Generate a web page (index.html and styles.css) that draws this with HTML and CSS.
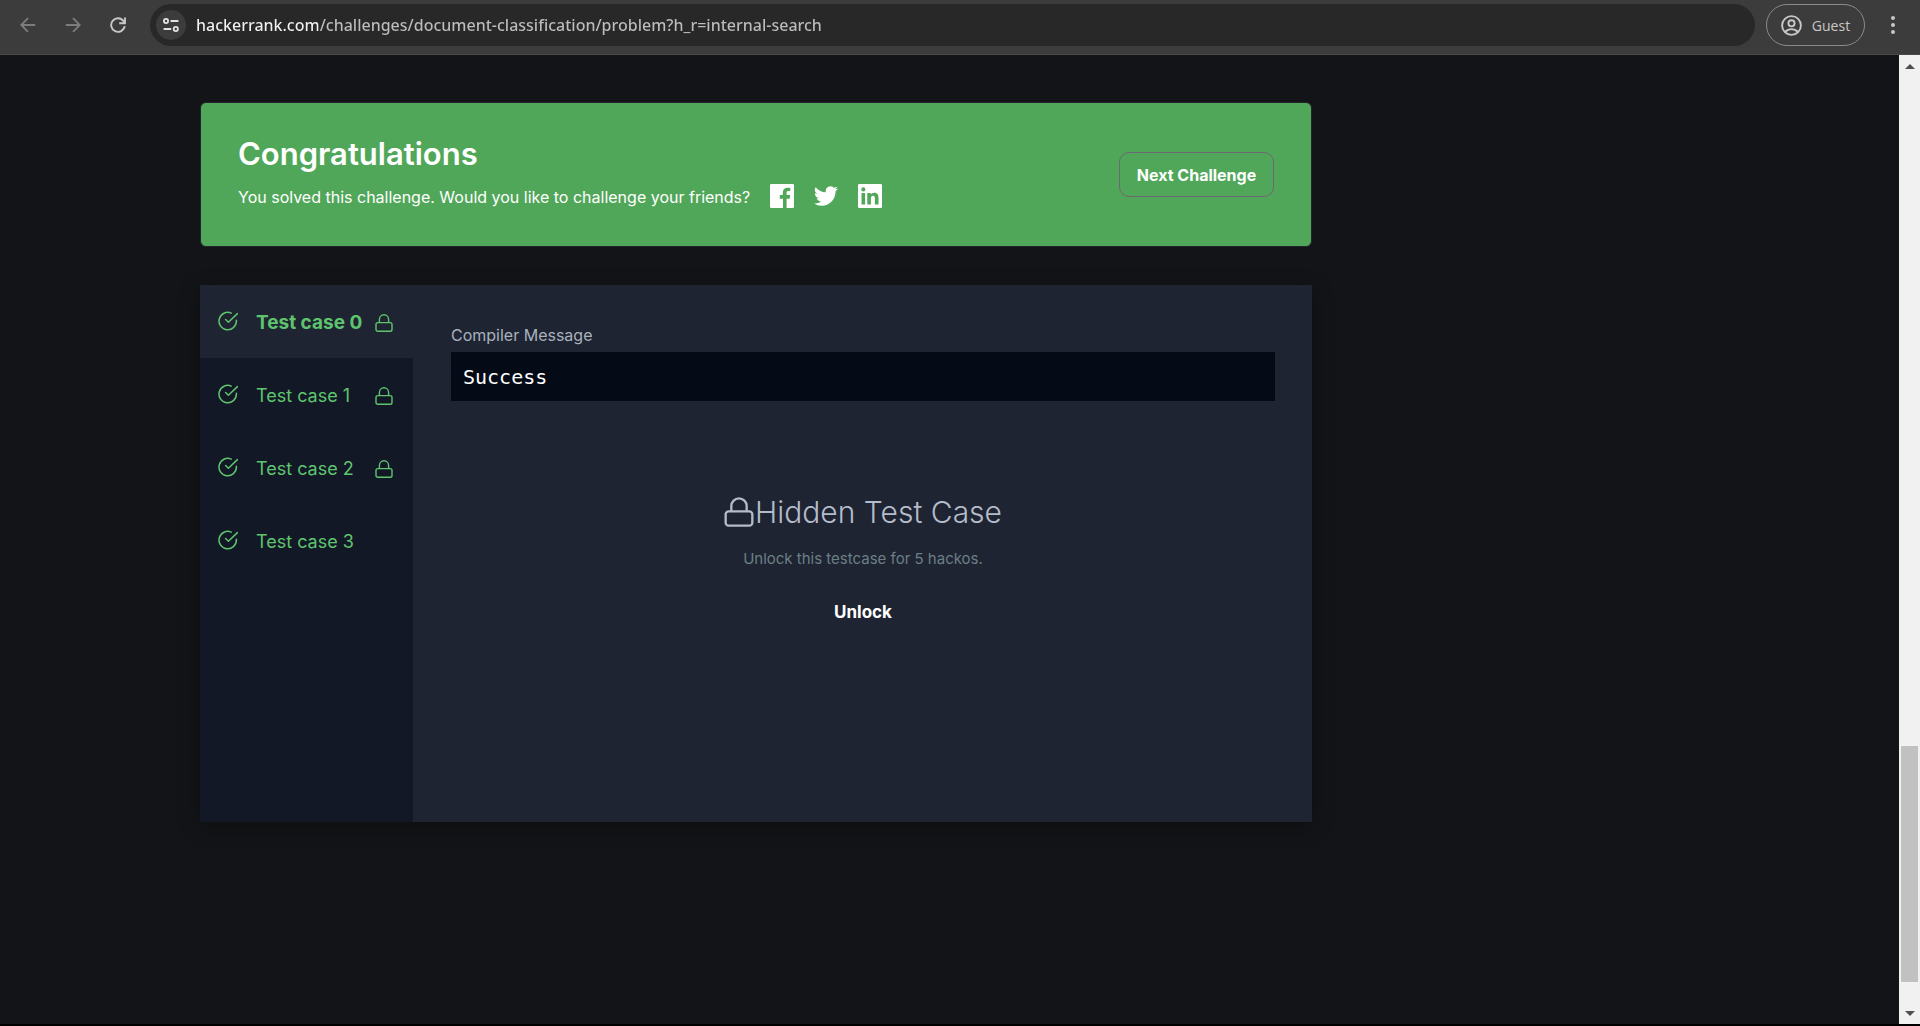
FILE: index.html
```html
<!DOCTYPE html>
<html lang="en">
<head>
<meta charset="utf-8">
<title>Document Classification | HackerRank</title>
<link rel="stylesheet" href="styles.css">
</head>
<body>
<svg class="sprite" aria-hidden="true">
  <symbol id="check" viewBox="0 0 20 20"><path d="M18.4 9.2v.8a8.7 8.7 0 1 1-5.2-7.9M19.4 2.6l-9 8.6-2.8-2.7" fill="none" stroke="currentColor" stroke-width="1.5" stroke-linecap="round" stroke-linejoin="round"/></symbol>
  <symbol id="lock" viewBox="0 0 18 18"><rect x="1" y="8.6" width="16" height="8.6" rx="1.8" fill="none" stroke="currentColor" stroke-width="1.4"/><path d="M4.4 8.6V5.4a4.6 4.6 0 0 1 9.2 0v3.2" fill="none" stroke="currentColor" stroke-width="1.4"/></symbol>
</svg>

<header class="toolbar">
  <nav class="nav">
    <button class="nav-btn nav-btn-off" type="button" aria-label="Back"><svg width="16" height="16" viewBox="0 0 16 16"><path d="M15.2 8H1.4M8 1.2L1.2 8 8 14.8" fill="none" stroke="currentColor" stroke-width="1.8"/></svg></button>
    <button class="nav-btn nav-btn-off" type="button" aria-label="Forward"><svg width="16" height="16" viewBox="0 0 16 16"><path d="M.8 8h13.8M8 1.2L14.8 8 8 14.8" fill="none" stroke="currentColor" stroke-width="1.8"/></svg></button>
    <button class="nav-btn" type="button" aria-label="Reload"><svg width="16" height="16" viewBox="0 0 16 16"><path d="M14.7 9.2A6.8 6.8 0 1 1 13.6 4.2L14.6 5.6M15 .4v5.8H9.2" fill="none" stroke="currentColor" stroke-width="1.9"/></svg></button>
  </nav>
  <div class="omnibox">
    <button class="site-info" type="button" aria-label="View site information"><svg width="16" height="14" viewBox="0 0 16 14"><g fill="none" stroke="currentColor" stroke-width="1.8"><circle cx="3" cy="3" r="2.1"/><path d="M7.6 3H15.4M.6 11H8.2"/><circle cx="12.8" cy="11" r="2.1"/></g></svg></button>
    <input class="address" type="text" aria-label="Address" value="hackerrank.com/challenges/document-classification/problem?h_r=internal-search">
  </div>
  <button class="guest" type="button">
    <svg width="21" height="21" viewBox="0 0 21 21"><g fill="none" stroke="currentColor" stroke-width="1.9"><circle cx="10.500" cy="10.500" r="9.400"/><circle cx="10.500" cy="8.300" r="3.100"/><path d="M4 17c1.800-2 4-2.900 6.500-2.900s4.700.9 6.500 2.900"/></g></svg>
    <span>Guest</span>
  </button>
  <button class="more" type="button" aria-label="More"><svg width="4" height="18" viewBox="0 0 4 18" fill="currentColor"><circle cx="2" cy="2" r="2"/><circle cx="2" cy="9" r="2"/><circle cx="2" cy="16" r="2"/></svg></button>
</header>

<div class="viewport">
  <main class="content">
    <section class="banner">
      <div class="banner-text">
        <h1 class="banner-title">Congratulations</h1>
        <div class="share">
          <p class="share-label">You solved this challenge. Would you like to challenge your friends?</p>
          <a class="share-link" href="#" aria-label="Facebook"><svg width="24" height="24" viewBox="0 0 24 24"><path fill="#fff" d="M1.300 0h21.400A1.300 1.300 0 0 1 24 1.300v21.400a1.300 1.300 0 0 1-1.300 1.300h-6.100v-9.300h3.100l.5-3.600h-3.600V8.800c0-1 .3-1.800 1.800-1.800h1.900V3.800c-.3 0-1.500-.1-2.800-.1-2.800 0-4.700 1.700-4.700 4.800v2.600H9.800v3.600h3.200V24H1.300A1.300 1.300 0 0 1 0 22.700V1.300A1.300 1.300 0 0 1 1.300 0z"/></svg></a>
          <a class="share-link" href="#" aria-label="Twitter"><svg width="24" height="24" viewBox="0 0 24 24"><path fill="#fff" d="M23.950 4.570a10 10 0 0 1-2.820.77 4.960 4.960 0 0 0 2.160-2.720c-.95.550-2 .95-3.130 1.180a4.920 4.920 0 0 0-8.380 4.480C7.690 8.090 4.070 6.130 1.640 3.160a4.920 4.920 0 0 0 1.520 6.570 4.900 4.900 0 0 1-2.230-.61v.06a4.920 4.920 0 0 0 3.950 4.830 5 5 0 0 1-2.210.08 4.940 4.940 0 0 0 4.600 3.420A9.870 9.870 0 0 1 0 19.540a13.990 13.990 0 0 0 7.550 2.210c9.050 0 14-7.500 14-13.980 0-.21 0-.42-.02-.63a9.940 9.940 0 0 0 2.460-2.550z"/></svg></a>
          <a class="share-link" href="#" aria-label="LinkedIn"><svg width="24" height="24" viewBox="0 0 24 24"><path fill="#fff" fill-rule="evenodd" d="M1.300 0h21.400A1.300 1.300 0 0 1 24 1.300v21.400a1.300 1.300 0 0 1-1.300 1.300H1.300A1.300 1.300 0 0 1 0 22.700V1.300A1.300 1.300 0 0 1 1.300 0zM3.500 9v11.400h3.600V9zM5.300 3.300a2.100 2.100 0 1 0 0 4.200 2.100 2.100 0 0 0 0-4.200zM9.300 9v11.400h3.600v-5.700c0-1.500.3-2.900 2.100-2.900s1.900 1.700 1.900 3v5.600h3.600v-6.200c0-3.100-.7-5.500-4.300-5.500-1.700 0-2.900.9-3.400 1.800V9z"/></svg></a>
        </div>
      </div>
      <button class="next" type="button">Next Challenge</button>
    </section>

    <section class="results">
      <div class="tabs" role="tablist">
        <button class="tab tab-active" type="button" role="tab" aria-selected="true"><svg class="tab-check"><use href="#check"/></svg><span class="tab-name">Test case 0</span><svg class="tab-lock"><use href="#lock"/></svg></button>
        <button class="tab" type="button" role="tab"><svg class="tab-check"><use href="#check"/></svg><span class="tab-name">Test case 1</span><svg class="tab-lock"><use href="#lock"/></svg></button>
        <button class="tab" type="button" role="tab"><svg class="tab-check"><use href="#check"/></svg><span class="tab-name">Test case 2</span><svg class="tab-lock"><use href="#lock"/></svg></button>
        <button class="tab" type="button" role="tab"><svg class="tab-check"><use href="#check"/></svg><span class="tab-name">Test case 3</span></button>
      </div>
      <div class="detail" role="tabpanel">
        <h2 class="detail-label">Compiler Message</h2>
        <pre class="output">Success</pre>
        <div class="hidden-case">
          <h3 class="hidden-title"><svg class="hidden-lock"><use href="#lock"/></svg>Hidden Test Case</h3>
          <p class="hidden-hint">Unlock this testcase for 5 hackos.</p>
          <button class="unlock" type="button">Unlock</button>
        </div>
      </div>
    </section>
  </main>
  <div class="scrollbar" aria-hidden="true">
    <span class="arrow arrow-up"></span>
    <span class="thumb"></span>
    <span class="arrow arrow-down"></span>
  </div>
</div>
</body>
</html>
```
FILE: styles.css
```css
* { box-sizing: border-box; }

body {
  margin: 0;
  min-height: 100vh;
  display: flex;
  flex-direction: column;
  background: #131417;
  border-bottom: 2px solid #000;
  color: #fff;
  font-family: Inter, "Liberation Sans", sans-serif;
  font-size: 16px;
}

button {
  padding: 0;
  border: 0;
  background: none;
  color: inherit;
  font: inherit;
}

h1, h2, h3, p, pre { margin: 0; }

svg { display: block; flex: none; }

.sprite { position: absolute; width: 0; height: 0; }

/* Browser toolbar */
.toolbar {
  display: flex;
  align-items: center;
  padding: 4px 0 8px 5px;
  background: #3c3c3c;
  border-bottom: 1px solid #484a48;
  color: #c7c7c7;
  font-family: "Open Sans", "Noto Sans", sans-serif;
}

.nav { display: flex; margin-right: 10px; }

.nav-btn {
  display: flex;
  align-items: center;
  justify-content: center;
  width: 45px;
  height: 42px;
}

.nav-btn-off { color: #7d7d7d; }

.omnibox {
  flex: 1;
  display: flex;
  align-items: center;
  gap: 10px;
  height: 42px;
  padding: 0 6px;
  border-radius: 21px;
  background: #282828;
}

.site-info {
  display: flex;
  align-items: center;
  justify-content: center;
  width: 30px;
  height: 30px;
  border-radius: 50%;
  background: #3c3c3c;
  color: #e3e3e3;
}

.address {
  flex: 1;
  padding: 0;
  border: 0;
  background: linear-gradient(90deg, #f2f2f2 122px, #bdbdbd 122px);
  background-clip: text;
  color: transparent;
  font: 500 16px/26px "Noto Sans", "Open Sans", sans-serif;
}

.guest {
  display: flex;
  align-items: center;
  justify-content: center;
  gap: 10px;
  width: 99px;
  height: 42px;
  margin-left: 11px;
  border: 1px solid #8a8a8a;
  border-radius: 21px;
  font-size: 14px;
}

.more {
  display: flex;
  align-items: center;
  justify-content: center;
  width: 55px;
  height: 42px;
}

/* Page area */
.viewport { flex: 1; display: flex; }

.content { flex: 1; padding: 47px 200px; }

.banner {
  display: flex;
  align-items: center;
  justify-content: space-between;
  max-width: 1112px;
  padding: 30px 37px;
  border: 1px solid #24222e;
  border-radius: 6px;
  background: #51a759;
}

.banner-title {
  font-size: 31px;
  font-weight: 600;
  line-height: 42px;
}

.share { display: flex; align-items: center; }

.share-label {
  margin-right: 20px;
  padding-top: 4px;
  line-height: 37px;
}

.share-link { margin-right: 20px; }

.next {
  width: 155px;
  height: 45px;
  border: 1px solid #6f6674;
  border-radius: 10px;
  font-weight: 700;
}

/* Test results */
.results {
  display: flex;
  max-width: 1112px;
  min-height: 537px;
  margin-top: 38px;
  background: #1e2431;
  box-shadow: 0 5px 20px rgba(0, 0, 0, .3);
}

.tabs { width: 213px; background: #121826; }

.tab {
  display: flex;
  align-items: center;
  width: 100%;
  height: 73px;
  padding: 2px 20px 0 18px;
  color: #5fc46e;
  font-size: 18px;
  text-align: left;
}

.tab-active {
  background: #1e2431;
  font-size: 19px;
  font-weight: 700;
}

.tab-check {
  width: 20px;
  height: 20px;
  margin: 0 18px 4px 0;
}

.tab-name { flex: 1; white-space: nowrap; }

.tab-lock { width: 18px; height: 18px; }

.detail { flex: 1; padding: 38px 37px 38px 38px; }

.detail-label {
  color: #aab1be;
  font-size: 16px;
  font-weight: 400;
  line-height: 24px;
}

.output {
  margin-top: 5px;
  padding: 13px 12px 11px;
  background: #040a16;
  font: 20px/25px "DejaVu Sans Mono", "Liberation Mono", monospace;
}

.hidden-case {
  display: flex;
  flex-direction: column;
  align-items: center;
  padding-top: 90px;
}

.hidden-title {
  display: flex;
  align-items: center;
  gap: 1px;
  color: #b4bccb;
  font-size: 30px;
  font-weight: 300;
  line-height: 42px;
}

.hidden-lock { width: 30px; height: 30px; }

.hidden-hint {
  margin-top: 14px;
  color: #6b7f86;
  font-size: 15px;
  line-height: 24px;
}

.unlock {
  margin-top: 24px;
  font-size: 17px;
  font-weight: 700;
  line-height: 34px;
}

/* Scrollbar */
.scrollbar {
  display: flex;
  flex-direction: column;
  align-items: center;
  justify-content: flex-end;
  width: 21px;
  padding: 9px 0 8px;
  background: #f1f1f1;
}

.arrow {
  border: solid transparent;
  border-width: 0 5px;
}

.arrow-up { margin-bottom: auto; border-bottom: 5px solid #505050; }

.arrow-down { margin-top: 29px; border-top: 5px solid #505050; }

.thumb {
  width: 17px;
  height: 236px;
  background: #c1c1c1;
}
```
